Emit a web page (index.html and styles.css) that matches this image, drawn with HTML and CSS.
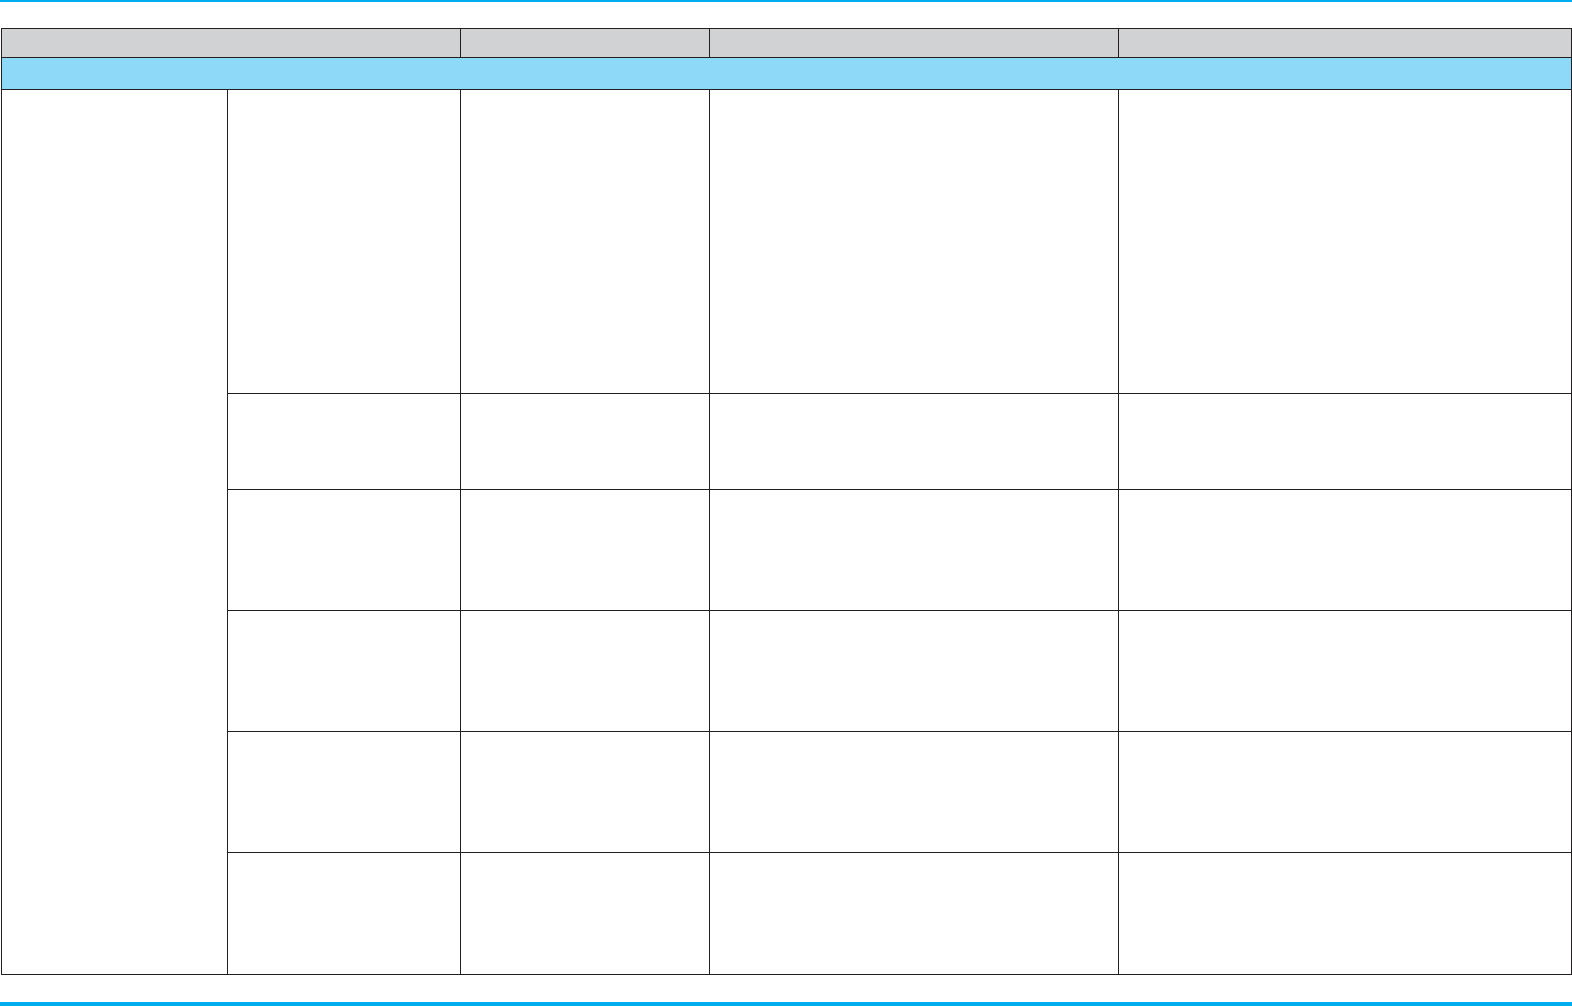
FILE: index.html
```html
<!DOCTYPE html>
<html lang="en">
<head>
<meta charset="utf-8">
<title>Table</title>
<link rel="stylesheet" href="styles.css">
</head>
<body>
<div class="bar bar-top"></div>
<div class="grid">
  <div class="cell head span-2"></div>
  <div class="cell head"></div>
  <div class="cell head"></div>
  <div class="cell head"></div>
  <div class="cell section"></div>
  <div class="cell group"></div>
  <div class="cell"></div><div class="cell"></div><div class="cell"></div><div class="cell"></div>
  <div class="cell"></div><div class="cell"></div><div class="cell"></div><div class="cell"></div>
  <div class="cell"></div><div class="cell"></div><div class="cell"></div><div class="cell"></div>
  <div class="cell"></div><div class="cell"></div><div class="cell"></div><div class="cell"></div>
  <div class="cell"></div><div class="cell"></div><div class="cell"></div><div class="cell"></div>
  <div class="cell"></div><div class="cell"></div><div class="cell"></div><div class="cell"></div>
</div>
<div class="bar bar-bottom"></div>
</body>
</html>
```
FILE: styles.css
```css
html, body {
  margin: 0;
  padding: 0;
  background: #ffffff;
  font-family: "Liberation Sans", Arial, sans-serif;
}
body {
  width: 1572px;
  height: 1006px;
  overflow: hidden;
}
.bar {
  background: #00aeef;
  width: 1572px;
}
.bar-top {
  height: 2px;
}
.bar-bottom {
  height: 4px;
  margin-top: 27px;
}
.grid {
  margin: 26px 0 0 1px;
  width: 1571px;
  box-sizing: border-box;
  padding: 1px;
  background: #231f20;
  display: grid;
  gap: 1px;
  grid-template-columns: 225px 232px 248px 408px 452px;
  grid-template-rows: 28px 31px 303px 95px 120px 120px 120px 121px;
}
.cell {
  background: #ffffff;
}
.head {
  background: #d1d2d3;
}
.span-2 {
  grid-column: 1 / 3;
}
.section {
  grid-column: 1 / -1;
  background: #8ed8f8;
}
.group {
  grid-column: 1;
  grid-row: 3 / span 6;
}
```
